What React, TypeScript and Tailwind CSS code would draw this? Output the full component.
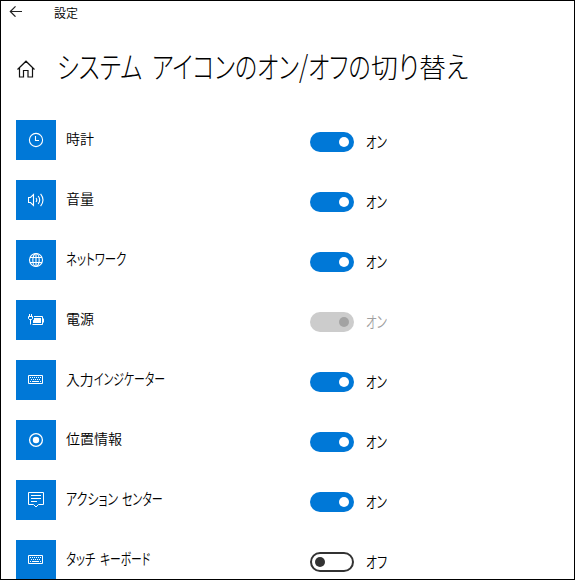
import React, { ReactNode, useLayoutEffect, useRef } from 'react';
import clsx from 'clsx';

type ToggleState = 'on' | 'off' | 'disabled';

interface TextRun {
  text: string;
  width: number;
}

interface SystemIcon {
  id: string;
  label: TextRun[];
  icon: ReactNode;
  state: ToggleState;
}

const FitText = ({ text, width, className }: { text: string; width: number; className?: string }) => {
  const ref = useRef<HTMLSpanElement>(null);

  useLayoutEffect(() => {
    const el = ref.current;
    if (el) el.style.transform = `scaleX(${width / el.offsetWidth})`;
  }, [text, width]);

  return (
    <span className="inline-block whitespace-nowrap" style={{ width }}>
      <span ref={ref} className={clsx("inline-block origin-left [font-feature-settings:'palt']", className)}>
        {text}
      </span>
    </span>
  );
};

const ClockIcon = () => (
  <svg width="16" height="16" viewBox="0 0 16 16" fill="none" stroke="white" strokeWidth="1.1">
    <circle cx="8" cy="8" r="6.6" />
    <path d="M7.5 4v4.5H11" />
  </svg>
);

const VolumeIcon = () => (
  <svg width="16" height="16" viewBox="0 0 16 16" fill="none" stroke="white" strokeWidth="1.1">
    <path d="M.5 5.500h2l3-3v11l-3-3h-2z" />
    <path d="M8 6q1.600 2 0 4M10.200 4q3 4 0 8M12.600 1.800q4.800 6.200 0 12.400" />
  </svg>
);

const GlobeIcon = () => (
  <svg width="16" height="16" viewBox="0 0 16 16" fill="none" stroke="white" strokeWidth="1.1">
    <circle cx="8" cy="8" r="6.5" />
    <ellipse cx="8" cy="8" rx="3.2" ry="6.5" />
    <path d="M2 5.500h12M2 10.500h12M8 1.500v13" />
  </svg>
);

const PowerIcon = () => (
  <svg width="16" height="16" viewBox="0 0 16 16" fill="none" stroke="white" strokeWidth="1">
    <path d="M1.500 2v3M3.500 2v3M.5 4.500h4v2l-1 1h-2l-1-1zM2.500 8v4.500" />
    <path d="M6 4.500h8.500v8H4.500M15.500 6.500v4" />
    <path d="M6 6h7v5H5V8.500l1-1z" fill="white" stroke="none" />
  </svg>
);

const KeyboardIcon = () => (
  <svg width="16" height="16" viewBox="0 0 16 16" fill="none" stroke="white" strokeWidth="1">
    <path d="M.5 3.500h14v8H.5z" />
    <path d="M2 5.500h11M3 7.500h10" strokeDasharray="1 1" />
    <path d="M2 9.500h1M4 9.500h7M12 9.500h1" />
  </svg>
);

const LocationIcon = () => (
  <svg width="16" height="16" viewBox="0 0 16 16" fill="none" stroke="white" strokeWidth="1.3">
    <circle cx="8" cy="8" r="6.4" />
    <circle cx="8" cy="8" r="3.2" fill="white" stroke="none" />
  </svg>
);

const ActionCenterIcon = () => (
  <svg width="16" height="16" viewBox="0 0 16 16" fill="none" stroke="white" strokeWidth="1">
    <path d="M.5.5h15v12h-5L8 15l-2.500-2.500h-5z" />
    <path d="M3 3.500h10M3 6.500h10M3 9.500h6" />
  </svg>
);

const BackIcon = () => (
  <svg className="shrink-0" width="14" height="12" viewBox="0 0 14 12" fill="none" stroke="#222" strokeWidth="1.2">
    <path d="M13 6.500H1.500M6.500 1.300L1.300 6.500l5.200 5.200" />
  </svg>
);

const HomeIcon = () => (
  <svg className="shrink-0" width="18" height="18" viewBox="0 0 18 18" fill="none" stroke="#111" strokeWidth="1.2">
    <path d="M.5 9.500L9 1.200l8.500 8.300M2.500 8v9h4v-6.500h4.500V17h4.500V8" />
  </svg>
);

const ICONS: SystemIcon[] = [
  { id: 'clock', label: [{ text: '時計', width: 28 }], icon: <ClockIcon />, state: 'on' },
  { id: 'volume', label: [{ text: '音量', width: 28 }], icon: <VolumeIcon />, state: 'on' },
  { id: 'network', label: [{ text: 'ネットワーク', width: 60.5 }], icon: <GlobeIcon />, state: 'on' },
  { id: 'power', label: [{ text: '電源', width: 28 }], icon: <PowerIcon />, state: 'disabled' },
  {
    id: 'input',
    label: [{ text: '入力', width: 27.5 }, { text: 'インジケーター', width: 71 }],
    icon: <KeyboardIcon />,
    state: 'on',
  },
  { id: 'location', label: [{ text: '位置情報', width: 56 }], icon: <LocationIcon />, state: 'on' },
  {
    id: 'action-center',
    label: [{ text: 'アクション', width: 52 }, { text: ' ', width: 4 }, { text: 'センター', width: 40.5 }],
    icon: <ActionCenterIcon />,
    state: 'on',
  },
  {
    id: 'touch-keyboard',
    label: [{ text: 'タッチ', width: 29.5 }, { text: ' ', width: 4.5 }, { text: 'キーボード', width: 50 }],
    icon: <KeyboardIcon />,
    state: 'off',
  },
];

const isKana = (text: string) => /^[ァ-ヶ]/.test(text);

const Toggle = ({ state }: { state: ToggleState }) => (
  <div
    className={clsx(
      'flex h-5 w-11 items-center rounded-full',
      state === 'on' && 'justify-end bg-[#0078d7] pr-[5px]',
      state === 'disabled' && 'justify-end bg-[#cccccc] pr-[5px]',
      state === 'off' && 'border-2 border-[#333333] pl-[3px]'
    )}
  >
    <span
      className={clsx(
        'size-2.5 rounded-full',
        state === 'on' && 'bg-white',
        state === 'disabled' && 'bg-[#a3a3a3]',
        state === 'off' && 'bg-[#333333]'
      )}
    />
  </div>
);

const IconRow = ({ label, icon, state }: SystemIcon) => (
  <li className="flex h-10 shrink-0 items-center">
    <div className="flex size-10 items-center justify-center bg-[#0078d7]">{icon}</div>
    <div
      className={clsx(
        'ml-2.5 flex w-[244px] items-baseline leading-5',
        label.some((run) => isKana(run.text)) ? 'pb-[3px]' : 'pb-1'
      )}
    >
      {label.map(({ text, width }) =>
        text === ' ' ? (
          <span key={text} style={{ width }}> </span>
        ) : (
          <FitText key={text} text={text} width={width} className={isKana(text) ? 'text-[15.5px]' : 'text-sm leading-5'} />
        )
      )}
    </div>
    <div className="flex items-center pt-1">
      <Toggle state={state} />
      <div className={clsx('ml-3 pb-px leading-5', state === 'disabled' && 'text-[#a0a0a0]')}>
        <FitText text={state === 'off' ? 'オフ' : 'オン'} width={21} className="text-[16px]" />
      </div>
    </div>
  </li>
);

export default function App() {
  return (
    <div className="flex h-[580px] w-[575px] flex-col overflow-hidden border border-black bg-white font-['Noto_Sans_CJK_JP',sans-serif] text-sm font-[350] text-black">
      <header className="flex h-6 shrink-0 items-center pl-2">
        <div className="pb-1">
          <BackIcon />
        </div>
        <span className="ml-[31px] text-xs">設定</span>
      </header>
      <div className="mt-5 flex h-12 shrink-0 items-center pl-4">
        <HomeIcon />
        <h1 className="ml-[22px] flex items-baseline pb-2 font-light leading-none">
          <FitText text="システム" width={85} className="text-[30px]" />
          <span className="w-2.5"> </span>
          <FitText text="アイコンのオン/オフの" width={219} className="text-[30px]" />
          <FitText text="切" width={27} className="text-[27px]" />
          <FitText text="り" width={21} className="text-[30px]" />
          <FitText text="替" width={27} className="text-[27px]" />
          <FitText text="え" width={22} className="text-[29px]" />
        </h1>
      </div>
      <ul className="mt-[27px] flex flex-col gap-5 pl-[15px]">
        {ICONS.map((item) => (
          <IconRow key={item.id} {...item} />
        ))}
      </ul>
    </div>
  );
}
